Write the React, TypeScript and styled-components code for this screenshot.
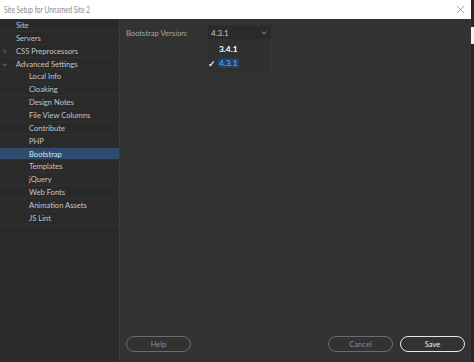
import styled, {createGlobalStyle} from "styled-components";

const GlobalStyle = createGlobalStyle`
    html, body {
        margin: 0;
        padding: 0;
        background: #1f1f1f;
    }
    body {
        font-family: Lato, "Open Sans", sans-serif;
    }
`

const Page = styled.div`
    display: flex;
    flex-flow: row nowrap;
    width: 474px;
    height: 362px;
    overflow: hidden;
`

const Dialog = styled.div`
    display: flex;
    flex-flow: column nowrap;
    width: 471px;
    height: 100%;
`

const BackStrip = styled.div`
    display: flex;
    flex-flow: column nowrap;
    width: 3px;
    padding-top: 27px;
    background: #262626;
`

const BackWindow = styled.div`
    height: 17px;
    background: #f2f2f2;
`

const TitleBar = styled.div`
    display: flex;
    align-items: center;
    justify-content: space-between;
    height: 19px;
    padding: 0 6px 0 4px;
    background: #ffffff;
    box-sizing: border-box;
`

const Title = styled.span`
    display: inline-block;
    color: #8c8c8c;
    font-size: 8.8px;
    white-space: nowrap;
    transform: scaleX(0.74);
    transform-origin: left center;
`

const Close = styled.svg`
    width: 9px;
    height: 9px;
`

const Body = styled.div`
    display: flex;
    flex-flow: row nowrap;
    flex: 1;
    min-height: 0;
`

const Sidebar = styled.div`
    display: flex;
    flex-flow: column nowrap;
    width: 119px;
    background: #2a2a2a;
    border-right: 1px solid #393939;
`

const Row = styled.div<{ $level: number, $selected?: boolean }>`
    display: flex;
    align-items: center;
    height: 12.87px;
    padding-left: ${p => p.$level === 0 ? 16 : 29}px;
    position: relative;
    box-sizing: border-box;
    border-bottom: 1px solid #303030;
    background: ${p => p.$selected ? "#2e4d6e" : "transparent"};
    color: ${p => p.$selected ? "#d6e6f5" : "#c4c4c4"};
    font-size: 7.6px;
    white-space: nowrap;
`

const Arrow = styled.svg`
    position: absolute;
    left: 2px;
    top: 4px;
    width: 5px;
    height: 5px;
`

const Main = styled.div`
    display: flex;
    flex-flow: column nowrap;
    justify-content: space-between;
    flex: 1;
    background: #323232;
    padding: 6px 5px 10px 6px;
    border-right: 1px solid #3a3a3a;
`

const Field = styled.div`
    display: flex;
    flex-flow: row nowrap;
    align-items: flex-start;
`

const Label = styled.div`
    width: 81px;
    padding-top: 3px;
    color: #a8a8a8;
    font-size: 7.6px;
`

const SelectWrap = styled.div`
    display: flex;
    flex-flow: column nowrap;
    width: 65px;
`

const SelectBox = styled.div`
    display: flex;
    align-items: center;
    justify-content: space-between;
    height: 15px;
    padding: 0 4px 0 3px;
    background: #2a2a2a;
    border: 1px solid #2f2f2f;
    color: #c8c8c8;
    font-size: 8px;
    box-sizing: border-box;
`

const Options = styled.div`
    display: flex;
    flex-flow: column nowrap;
    padding: 2px 0 3px 0;
    background: #303030;
    border: 1px solid #363636;
    border-top: none;
`

const Option = styled.div<{ $active?: boolean }>`
    display: flex;
    align-items: center;
    height: 14px;
    color: ${p => p.$active ? "#4d9eea" : "#ffffff"};
    font-size: 8.4px;
    font-weight: 700;
`

const Check = styled.span`
    display: inline-flex;
    width: 10px;
    color: #e8e8e8;
    font-size: 9px;
`

const OptionText = styled.span<{ $active?: boolean }>`
    padding: 0 1px;
    background: ${p => p.$active ? "#24415f" : "transparent"};
`

const Footer = styled.div`
    display: flex;
    flex-flow: row nowrap;
    align-items: center;
    gap: 7px;
`

const Spacer = styled.div`
    flex: 1;
`

const PillButton = styled.button<{ $primary?: boolean }>`
    width: 65px;
    height: 16px;
    padding: 0;
    border-radius: 8px;
    background: transparent;
    border: ${p => p.$primary ? "1.5px solid #e6e6e6" : "1px solid #6c6c6c"};
    color: ${p => p.$primary ? "#f0f0f0" : "#8a8a8a"};
    font-family: Lato, "Open Sans", sans-serif;
    font-size: 7.6px;
    box-sizing: border-box;
`

type Item = { label: string, level: number, arrow?: "right" | "down", selected?: boolean }

const items: Item[] = [
    {label: "Site", level: 0},
    {label: "Servers", level: 0},
    {label: "CSS Preprocessors", level: 0, arrow: "right"},
    {label: "Advanced Settings", level: 0, arrow: "down"},
    {label: "Local Info", level: 1},
    {label: "Cloaking", level: 1},
    {label: "Design Notes", level: 1},
    {label: "File View Columns", level: 1},
    {label: "Contribute", level: 1},
    {label: "PHP", level: 1},
    {label: "Bootstrap", level: 1, selected: true},
    {label: "Templates", level: 1},
    {label: "jQuery", level: 1},
    {label: "Web Fonts", level: 1},
    {label: "Animation Assets", level: 1},
    {label: "JS Lint", level: 1},
]

export default function App() {
    return (
        <>
            <GlobalStyle/>
            <Page>
                <Dialog>
                    <TitleBar>
                        <Title>Site Setup for Unnamed Site 2</Title>
                        <Close viewBox="0 0 10 10">
                            <path d="M1 1 L9 9 M9 1 L1 9" stroke="#9a9a9a" strokeWidth="1"/>
                        </Close>
                    </TitleBar>
                    <Body>
                        <Sidebar>
                            {items.map(item => (
                                <Row key={item.label} $level={item.level} $selected={item.selected}>
                                    {item.arrow === "right" && (
                                        <Arrow viewBox="0 0 6 6">
                                            <path d="M2 0.5 L4.5 3 L2 5.5" fill="none" stroke="#9a9a9a" strokeWidth="0.9"/>
                                        </Arrow>
                                    )}
                                    {item.arrow === "down" && (
                                        <Arrow viewBox="0 0 6 6">
                                            <path d="M0.5 2 L3 4.5 L5.5 2" fill="none" stroke="#9a9a9a" strokeWidth="0.9"/>
                                        </Arrow>
                                    )}
                                    {item.label}
                                </Row>
                            ))}
                        </Sidebar>
                        <Main>
                            <Field>
                                <Label>Bootstrap Version:</Label>
                                <SelectWrap>
                                    <SelectBox>
                                        <span>4.3.1</span>
                                        <svg width="6" height="4" viewBox="0 0 6 4">
                                            <path d="M0.5 0.5 L3 3 L5.5 0.5" fill="none" stroke="#a0a0a0" strokeWidth="0.9"/>
                                        </svg>
                                    </SelectBox>
                                    <Options>
                                        <Option><Check/><OptionText>3.4.1</OptionText></Option>
                                        <Option $active><Check>✓</Check><OptionText $active>4.3.1</OptionText></Option>
                                    </Options>
                                </SelectWrap>
                            </Field>
                            <Footer>
                                <PillButton>Help</PillButton>
                                <Spacer/>
                                <PillButton>Cancel</PillButton>
                                <PillButton $primary>Save</PillButton>
                            </Footer>
                        </Main>
                    </Body>
                </Dialog>
                <BackStrip>
                    <BackWindow/>
                </BackStrip>
            </Page>
        </>
    )
}
